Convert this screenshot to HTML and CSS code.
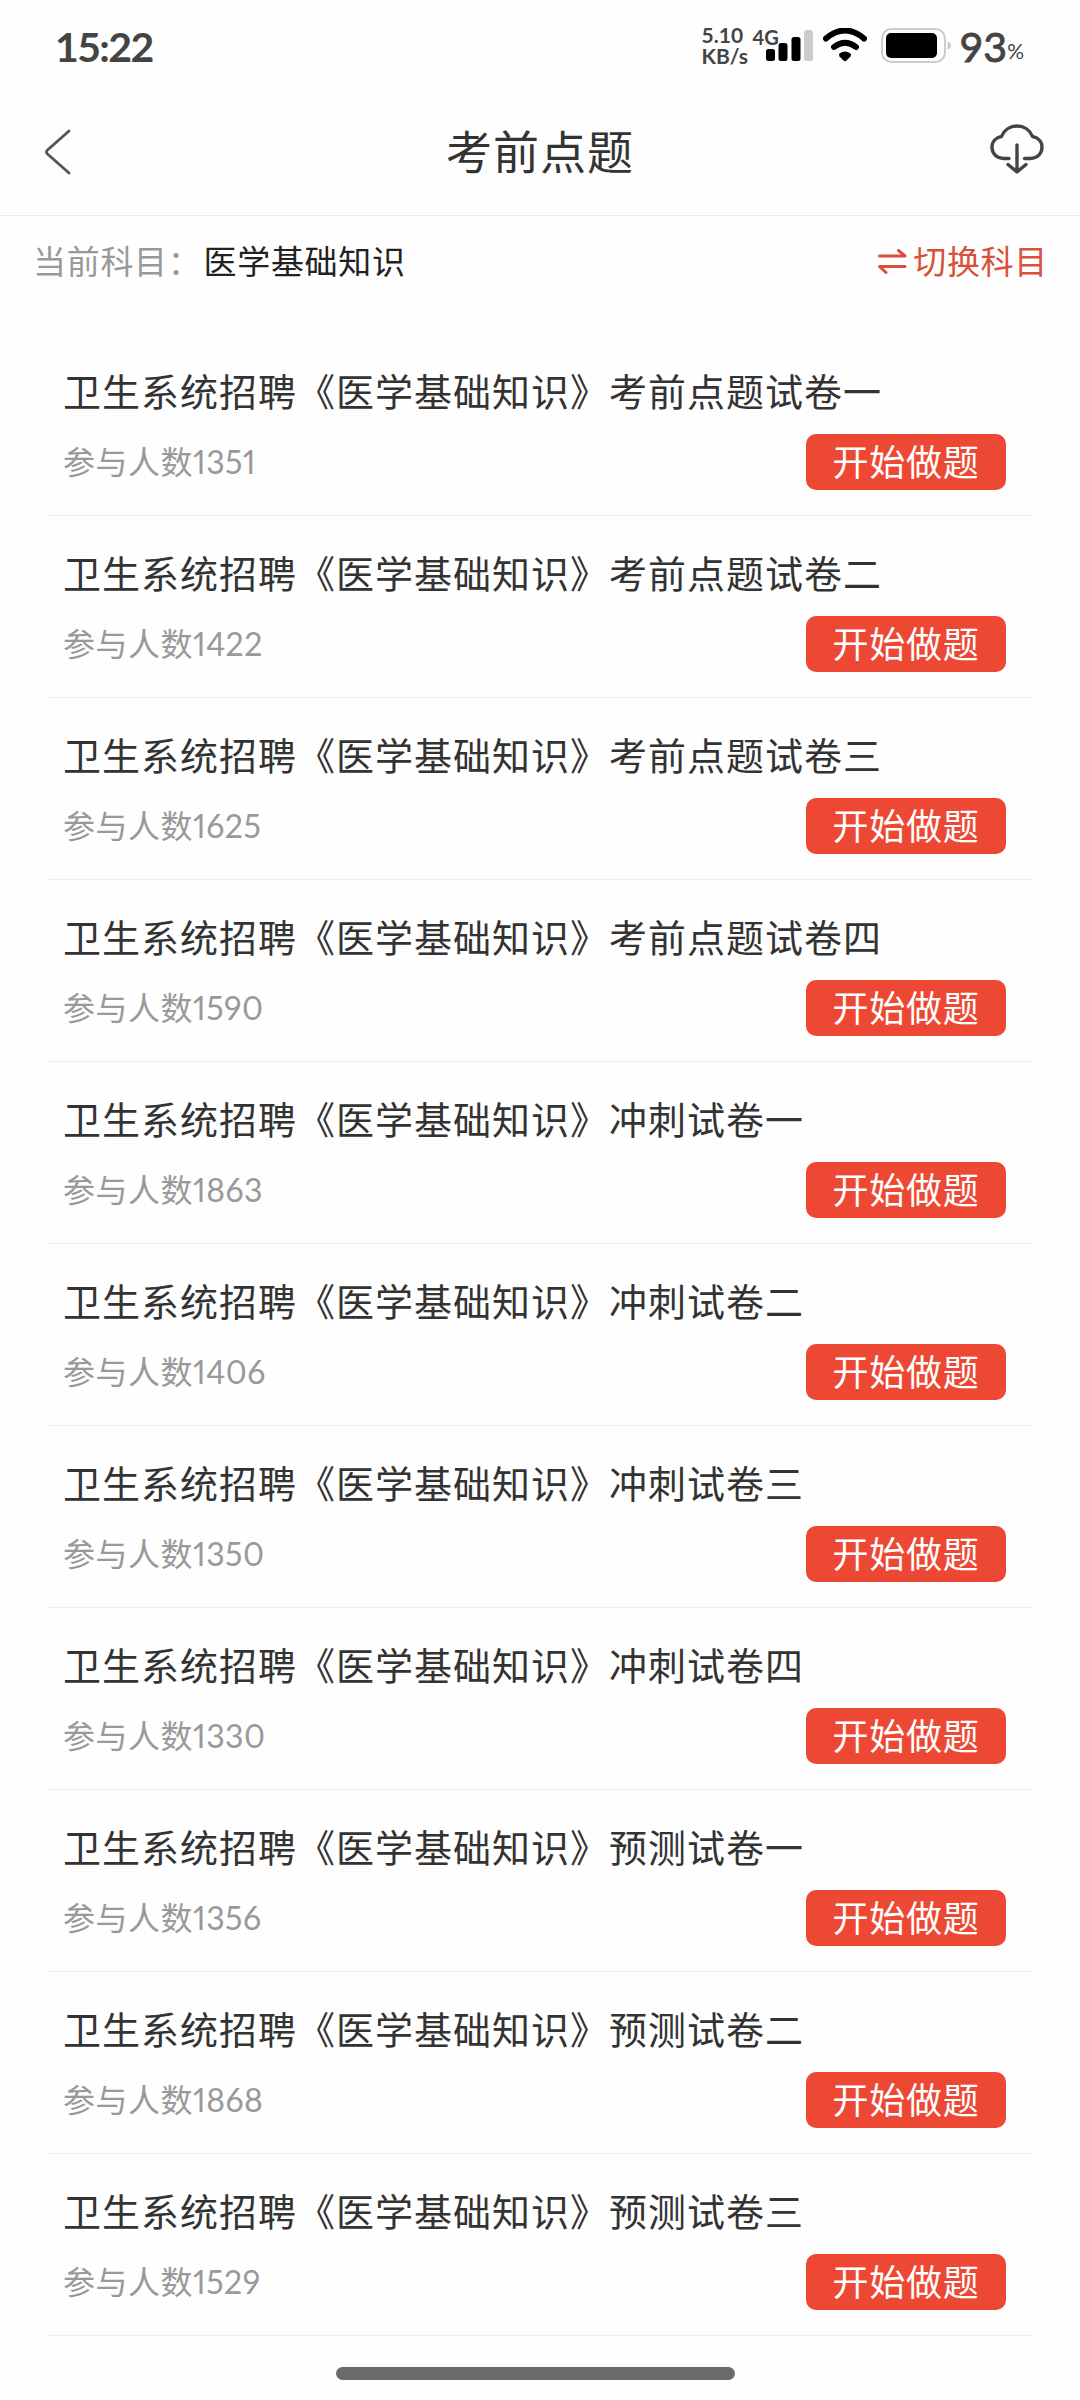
FILE: index.html
```html
<!DOCTYPE html>
<html lang="zh-CN">
<head>
  <meta charset="UTF-8">
  <meta name="viewport" content="width=device-width, initial-scale=1.0">
  <title>考前点题</title>
  <link rel="stylesheet" href="styles.css">
</head>
<body>
  <div class="status-bar">
    <span class="time">15:22</span>
    <div class="status-icons">
      <div class="net-speed"><span>5.10</span><span>KB/s</span></div>
      <div class="signal">
        <span class="net-type">4G</span>
        <svg width="47" height="32" viewBox="0 0 47 32">
          <rect x="0" y="19" width="9" height="12" rx="2.5"/>
          <rect x="12.5" y="13" width="9" height="18" rx="2.5"/>
          <rect x="25.5" y="7" width="9" height="24" rx="2.5"/>
          <rect x="38" y="0" width="9" height="31" rx="2.5" fill="#ccc"/>
        </svg>
      </div>
      <svg class="wifi" width="44" height="34" viewBox="0 0 44 34">
        <path d="M3 10.5Q22 -5.5 41 10.5M11 19Q22 10.5 33 19" fill="none" stroke="#000" stroke-width="6" stroke-linecap="round"/>
        <path d="M16.5 25.5Q22 21.5 27.5 25.5Q28.5 27 27.5 28.5L23.5 32.5Q22 34 20.5 32.5L16.5 28.5Q15.5 27 16.5 25.5Z"/>
      </svg>
      <svg class="battery" width="70" height="36" viewBox="0 0 70 36">
        <rect x="1" y="1" width="63" height="33" rx="9.5" fill="none" stroke="#ccc" stroke-width="2"/>
        <rect x="5" y="5" width="51" height="25" rx="5"/>
        <path d="M66.5 13.5Q70 14.5 70 17.5Q70 20.5 66.5 21.5Z" fill="#ccc"/>
      </svg>
      <span class="percent">93<small>%</small></span>
    </div>
  </div>

  <header class="nav">
    <svg class="back" width="28" height="48" viewBox="0 0 28 48">
      <path d="M25 3L3.5 22Q1.5 24 3.5 26L25 45" fill="none" stroke="#555" stroke-width="2.8" stroke-linecap="round"/>
    </svg>
    <h1>考前点题</h1>
    <svg class="download" width="54" height="50" viewBox="0 0 54 50" fill="none" stroke="#444" stroke-width="3.4" stroke-linecap="round" stroke-linejoin="round">
      <path d="M19 34.5H13.5C6.5 34.5 2 29.5 2 23C2 17.5 6 13.5 11.5 12.5C14 6 20 2 27 2C34 2 40 6 42.5 12.5C48 13.5 52 17.5 52 23C52 29.5 47.5 34.5 40.5 34.5H34.5"/>
      <path d="M27 21V47.5M18 40.5L27 48L36 40.5"/>
    </svg>
  </header>

  <div class="subject">
    <p><span class="label">当前科目：</span>医学基础知识</p>
    <a class="switch">
      <svg width="30" height="28" viewBox="0 0 30 28" fill="none" stroke="#d9503a" stroke-width="3" stroke-linecap="round" stroke-linejoin="round">
        <path d="M2.5 9H28L21.5 3.5M28 19.5H2.5L9 25.5"/>
      </svg>
      切换科目
    </a>
  </div>

  <ul class="paper-list">
    <li><h2>卫生系统招聘《医学基础知识》考前点题试卷一</h2><div class="row"><span>参与人数1351</span><button>开始做题</button></div></li>
    <li><h2>卫生系统招聘《医学基础知识》考前点题试卷二</h2><div class="row"><span>参与人数1422</span><button>开始做题</button></div></li>
    <li><h2>卫生系统招聘《医学基础知识》考前点题试卷三</h2><div class="row"><span>参与人数1625</span><button>开始做题</button></div></li>
    <li><h2>卫生系统招聘《医学基础知识》考前点题试卷四</h2><div class="row"><span>参与人数1590</span><button>开始做题</button></div></li>
    <li><h2>卫生系统招聘《医学基础知识》冲刺试卷一</h2><div class="row"><span>参与人数1863</span><button>开始做题</button></div></li>
    <li><h2>卫生系统招聘《医学基础知识》冲刺试卷二</h2><div class="row"><span>参与人数1406</span><button>开始做题</button></div></li>
    <li><h2>卫生系统招聘《医学基础知识》冲刺试卷三</h2><div class="row"><span>参与人数1350</span><button>开始做题</button></div></li>
    <li><h2>卫生系统招聘《医学基础知识》冲刺试卷四</h2><div class="row"><span>参与人数1330</span><button>开始做题</button></div></li>
    <li><h2>卫生系统招聘《医学基础知识》预测试卷一</h2><div class="row"><span>参与人数1356</span><button>开始做题</button></div></li>
    <li><h2>卫生系统招聘《医学基础知识》预测试卷二</h2><div class="row"><span>参与人数1868</span><button>开始做题</button></div></li>
    <li><h2>卫生系统招聘《医学基础知识》预测试卷三</h2><div class="row"><span>参与人数1529</span><button>开始做题</button></div></li>
  </ul>

  <div class="home-bar"></div>
</body>
</html>
```
FILE: styles.css
```css
* { box-sizing:border-box; }
body { margin:0; height:2400px; overflow:hidden; display:flex; flex-direction:column; background:#fefefe; color:#333; font-family:Lato,"Noto Sans CJK SC",sans-serif; }
h1, h2, p, ul { margin:0; padding:0; font-weight:normal; }
svg { display:block; flex:none; }

/* status bar */
.status-bar { height:92px; display:flex; justify-content:space-between; padding:0 56px 0 55px; color:#444; font-family:Lato,sans-serif; }
.time { font-size:41px; line-height:93px; font-weight:bold; letter-spacing:-1.6px; }
.status-icons { display:flex; align-items:flex-start; }
.net-speed { display:flex; flex-direction:column; width:51px; padding-top:25px; font-size:21px; line-height:20.5px; font-weight:bold; }
.signal { position:relative; width:60px; padding:30px 0 0 13px; }
.net-type { position:absolute; left:0; top:26px; font-size:20px; line-height:22px; font-weight:bold; }
.wifi { margin:28px 0 0 10px; }
.battery { margin:28px 0 0 14px; }
.percent { margin-left:9px; font-size:41px; line-height:93px; -webkit-text-stroke:.9px #444; }
.percent small { font-size:21px; vertical-align:3px; -webkit-text-stroke:0; }

.nav { height:124px; display:flex; align-items:center; justify-content:space-between; padding:0 36px 3px 44px; border-bottom:1px solid #ebebeb; }
.nav h1 { padding-left:18px; font-size:46px; line-height:60px; letter-spacing:1px; }
.download { margin-top:-6px; }

.subject { height:100px; display:flex; align-items:flex-start; justify-content:space-between; padding:20px 32px 0 33px; font-size:33px; line-height:50px; letter-spacing:.7px; }
.subject p { color:#222; }
.label { margin-right:2px; color:#999; }
.switch { display:flex; align-items:center; gap:6px; color:#d9503a; }

.paper-list { list-style:none; padding:18px 47px 0 48px; }
.paper-list li { height:182px; padding:32px 27px 0 15px; border-bottom:1px solid #eee; }
.paper-list h2 { font-size:38px; line-height:50px; letter-spacing:1px; white-space:nowrap; }
.row { display:flex; align-items:center; justify-content:space-between; height:56px; margin-top:18px; color:#999; font-size:32px; }
.row span { padding-bottom:5px; letter-spacing:.5px; font-variant-numeric:proportional-nums; }
.row button { width:200px; height:56px; padding:0; border:none; border-radius:10px; background:#ec4833; color:#fff; font-family:inherit; font-size:36px; line-height:56px; letter-spacing:.8px; }

.home-bar { width:399px; height:13px; margin:31px 0 0 336px; border-radius:7px; background:#6a6a6a; }
```
